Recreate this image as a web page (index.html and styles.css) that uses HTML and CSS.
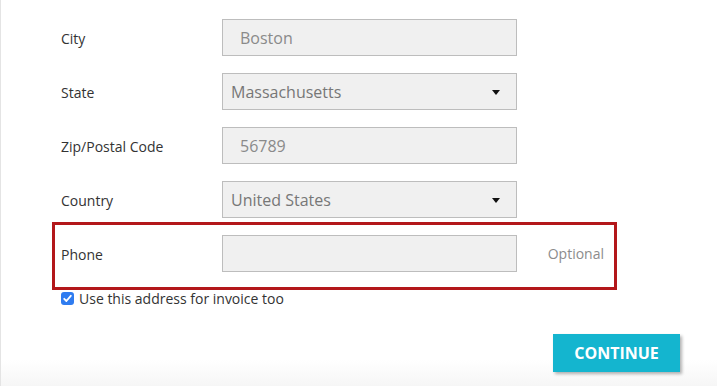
FILE: index.html
```html
<!DOCTYPE html>
<html>
<head>
  <meta charset="UTF-8">
  <title>Address</title>
  <link rel="stylesheet" href="styles.css">
</head>
<body>
  <div class="page">
    <form class="address-form">
      <div class="form-row">
        <label class="field-label">City</label>
        <div class="field-input text-input">Boston</div>
      </div>
      <div class="form-row">
        <label class="field-label">State</label>
        <div class="field-input select-input">Massachusetts<span class="caret"></span></div>
      </div>
      <div class="form-row">
        <label class="field-label">Zip/Postal Code</label>
        <div class="field-input text-input">56789</div>
      </div>
      <div class="form-row">
        <label class="field-label">Country</label>
        <div class="field-input select-input">United States<span class="caret"></span></div>
      </div>
      <div class="form-row highlight">
        <label class="field-label">Phone</label>
        <div class="field-input text-input"></div>
        <span class="field-hint">Optional</span>
      </div>
      <label class="check-row">
        <span class="checkbox">
          <svg width="13" height="13" viewBox="0 0 13 13"><path d="M3.2 6.8 L5.4 9 L9.8 3.8" fill="none" stroke="#fff" stroke-width="1.8" stroke-linecap="round" stroke-linejoin="round"/></svg>
        </span>
        Use this address for invoice too
      </label>
      <div class="actions">
        <button type="button" class="continue-button">CONTINUE</button>
      </div>
    </form>
  </div>
</body>
</html>
```

FILE: styles.css
```css
html, body {
  margin: 0;
  padding: 0;
  height: 100%;
}

body {
  font-family: 'Open Sans', 'Segoe UI', Tahoma, sans-serif;
  color: #333;
  background: #fff;
}

.page {
  box-sizing: border-box;
  height: 386px;
  border-left: 1px solid #e4e4e4;
  padding: 19px 0 0 60px;
  background: linear-gradient(to bottom, #fff 0, #fff 360px, #f6f6f6 386px);
}

.form-row {
  display: flex;
  align-items: center;
  height: 37px;
  margin-bottom: 17px;
}

.field-label {
  width: 161px;
  font-size: 14px;
  padding-top: 2px;
}

.field-input {
  box-sizing: border-box;
  width: 295px;
  height: 37px;
  background: #f0f0f0;
  border: 1px solid #bdbdbd;
  font-size: 16px;
  color: #8a8a8a;
  display: flex;
  align-items: center;
}

.text-input {
  padding-left: 17px;
}

.select-input {
  padding-left: 8px;
  color: #777;
  position: relative;
}

.caret {
  position: absolute;
  right: 16px;
  top: 16px;
  width: 0;
  height: 0;
  border-left: 4px solid transparent;
  border-right: 4px solid transparent;
  border-top: 5px solid #111;
}

.field-hint {
  margin-left: auto;
  margin-right: 13px;
  font-size: 14px;
  color: #8c8c8c;
}

/* red highlight round the phone row */
.highlight {
  position: relative;
  width: 556px;
}

.highlight::after {
  content: "";
  position: absolute;
  left: -9px;
  top: -13px;
  right: 0;
  bottom: -18px;
  border: 3px solid #b3171a;
}

.check-row {
  display: flex;
  align-items: center;
  gap: 5px;
  font-size: 14px;
}

.checkbox {
  width: 13px;
  height: 13px;
  border-radius: 3px;
  background: #2f7cf0;
  display: flex;
}

.actions {
  width: 619px;
  display: flex;
  justify-content: flex-end;
  margin-top: 26px;
}

.continue-button {
  width: 127px;
  height: 38px;
  border: none;
  background: #14b5cf;
  color: #fff;
  font-family: 'Open Sans', sans-serif;
  font-weight: 700;
  font-size: 16px;
  box-shadow: 2px 2px 3px rgba(0, 0, 0, 0.3);
  cursor: pointer;
}
```
